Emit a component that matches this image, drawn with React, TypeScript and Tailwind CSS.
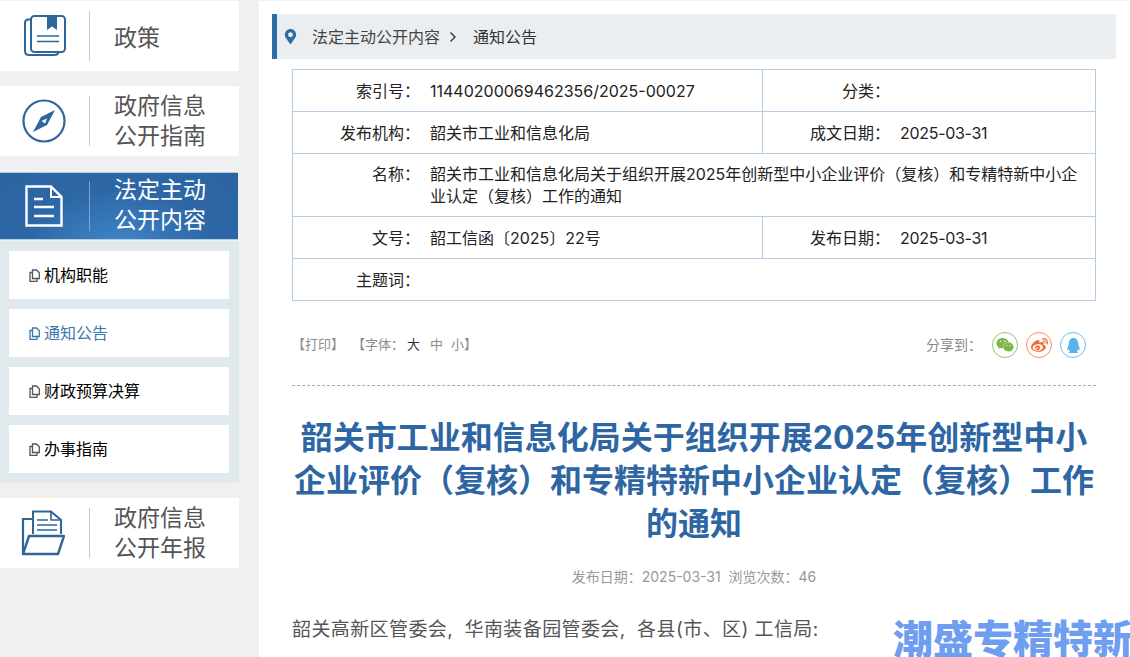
import { ChevronRight } from "lucide-react";
import { FaMapMarkerAlt, FaQq, FaWeibo, FaWeixin } from "react-icons/fa";
import type { ReactNode } from "react";

const fontCls = "font-['Inter','Noto_Sans_CJK_SC',sans-serif]";

const BookIcon = () => (
  <svg width="42" height="42" viewBox="0 0 42 42" fill="none" stroke="#2f659c" strokeWidth="2">
    <path d="M7 4.500H4.500Q1 4.500 1 8V36Q1 40 5 40H30Q34 40 34.500 37" />
    <rect x="7" y="1" width="34" height="36" rx="3.500" />
    <path d="M23 1H33V15L28 11.500L23 15Z" fill="#2f659c" stroke="none" />
    <path d="M13 21H35M13 26.500H35" strokeWidth="1.600" />
  </svg>
);

const CompassIcon = () => (
  <svg width="44" height="44" viewBox="0 0 44 44" fill="none" className="-ml-[2px]">
    <circle cx="22" cy="22" r="20.500" stroke="#2f659c" strokeWidth="2.200" />
    <path d="M33 11L25 26L11 33L19 18Z" fill="#2f659c" />
    <path d="M19.500 22L25 19.500L23 24.500Z" fill="#fff" />
  </svg>
);

const DocIcon = () => (
  <svg width="38" height="42" viewBox="0 0 38 42" fill="none" stroke="#fff" strokeWidth="2.400" className="-ml-[2px]">
    <path d="M1.500 1.500H26L36.500 12V40.500H1.500Z" />
    <path d="M26 1.500V12H36.500" strokeWidth="2" />
    <path d="M9 14H18M9 22H29M9 31H29" strokeWidth="2.600" />
  </svg>
);

const FolderIcon = () => (
  <svg width="44" height="46" viewBox="0 0 44 46" fill="none" stroke="#2f659c" strokeWidth="2" className="-ml-[3px]">
    <path d="M12 24V1.500H30L40 10V24" />
    <path d="M30 1.500V10H40" strokeWidth="1.600" />
    <path d="M16 10H27M16 15H36M16 20H36" strokeWidth="1.600" />
    <path d="M12 9H2V44" strokeWidth="2.200" />
    <path d="M8 26H43L37 44H2Z" strokeWidth="2.400" strokeLinejoin="round" />
  </svg>
);

const PageIcon = ({ className }: { className: string }) => (
  <svg width="11" height="13" viewBox="0 0 11 13" fill="none" stroke="currentColor" strokeWidth="1.300" className={className}>
    <path d="M3.500 1H7.500L10.300 3.800V9.500H3.500Z" />
    <path d="M3.500 3.500H1V12.300H8V9.500" />
  </svg>
);

const NavCard = ({
  icon,
  lines,
  active
}: {
  icon: ReactNode;
  lines: string[];
  active?: boolean;
}) => {
  if (active) {
    return (
      <div className="flex h-[68px] w-[238px] items-center border-y border-[#b5cde3] bg-[radial-gradient(ellipse_at_50%_110%,#3f86c9_0%,#2d67a5_55%,#2c64a2_100%)]">
        <div className="flex w-[89px] justify-center">{icon}</div>
        <div className="h-[50px] w-px bg-[#7ba3cc]"></div>
        <div className="pb-[2px] pl-6 text-[23px] leading-[30px] text-white">
          {lines.map((line) => (
            <div key={line}>{line}</div>
          ))}
        </div>
      </div>
    );
  }
  return (
    <div className="flex h-[70px] items-center bg-white">
      <div className="flex w-[89px] justify-center">{icon}</div>
      <div className="h-[50px] w-px bg-[#c9c9c9]"></div>
      <div className={`pl-6 text-[23px] leading-[30px] text-[#555] ${lines.length === 1 ? "pt-[3px]" : ""}`}>
        {lines.map((line) => (
          <div key={line}>{line}</div>
        ))}
      </div>
    </div>
  );
};

const subMenu = ["机构职能", "通知公告", "财政预算决算", "办事指南"];

const Sidebar = () => (
  <aside className="w-[239px] shrink-0 pt-px">
    <NavCard icon={<BookIcon />} lines={["政策"]} />
    <div className="mt-[15px]">
      <NavCard icon={<CompassIcon />} lines={["政府信息", "公开指南"]} />
    </div>
    <div className="mt-4">
      <NavCard active icon={<DocIcon />} lines={["法定主动", "公开内容"]} />
    </div>
    <div className="mt-px flex flex-col gap-[10px] bg-[#dfe9ee] pb-[10px] pl-[9px] pr-[10px] pt-[10px]">
      {subMenu.map((name) => {
        const on = name === "通知公告";
        return (
          <div key={name} className="flex h-12 items-center gap-1 bg-white pl-5 text-base">
            <PageIcon className={on ? "text-[#3d78ad]" : "text-[#555]"} />
            <span className={on ? "text-[#3d78ad]" : "text-black"}>{name}</span>
          </div>
        );
      })}
    </div>
    <div className="mt-[15px]">
      <NavCard icon={<FolderIcon />} lines={["政府信息", "公开年报"]} />
    </div>
  </aside>
);

const cellCls = "border border-[#b4cde2] text-base leading-[22px] text-[#222]";
const labelCls = "w-[127px] shrink-0 text-right";
const valueCls = "pl-[10px]";

const InfoTable = () => (
  <table className="w-[804px] table-fixed border-collapse">
    <tbody>
      <tr className="h-[42px]">
        <td className={`${cellCls} w-[470px]`} colSpan={2}>
          <div className="flex">
            <span className={labelCls}>索引号：</span>
            <span className={valueCls}>11440200069462356/2025-00027</span>
          </div>
        </td>
        <td className={cellCls} colSpan={2}>
          <div className="flex">
            <span className={labelCls}>分类：</span>
          </div>
        </td>
      </tr>
      <tr className="h-[42px]">
        <td className={cellCls} colSpan={2}>
          <div className="flex">
            <span className={labelCls}>发布机构：</span>
            <span className={valueCls}>韶关市工业和信息化局</span>
          </div>
        </td>
        <td className={cellCls} colSpan={2}>
          <div className="flex">
            <span className={labelCls}>成文日期：</span>
            <span className={`${valueCls} tracking-[-0.3px]`}>2025-03-31</span>
          </div>
        </td>
      </tr>
      <tr className="h-[63px]">
        <td className={cellCls} colSpan={4}>
          <div className="flex">
            <span className={labelCls}>名称：</span>
            <span className={`${valueCls} pr-4`}>
              韶关市工业和信息化局关于组织开展2025年创新型中小企业评价（复核）和专精特新中小企业认定（复核）工作的通知
            </span>
          </div>
        </td>
      </tr>
      <tr className="h-[42px]">
        <td className={cellCls} colSpan={2}>
          <div className="flex">
            <span className={labelCls}>文号：</span>
            <span className={valueCls}>韶工信函〔2025〕22号</span>
          </div>
        </td>
        <td className={cellCls} colSpan={2}>
          <div className="flex">
            <span className={labelCls}>发布日期：</span>
            <span className={`${valueCls} tracking-[-0.3px]`}>2025-03-31</span>
          </div>
        </td>
      </tr>
      <tr className="h-[42px]">
        <td className={cellCls} colSpan={4}>
          <div className="flex">
            <span className={labelCls}>主题词：</span>
          </div>
        </td>
      </tr>
    </tbody>
  </table>
);

const ShareBtn = ({ color, children }: { color: string; children: ReactNode }) => (
  <span
    className={`flex h-[26px] w-[26px] items-center justify-center rounded-full border ${color}`}
  >
    {children}
  </span>
);

const App = () => {
  return (
    <div className={`relative flex h-[657px] w-[1130px] gap-5 overflow-hidden bg-[#f0f0f0] ${fontCls}`}>
      <Sidebar />
      <main className="mt-px flex-1 bg-white pl-[13px] pr-[14px] pt-[13px]">
        <div className="flex h-[45px] items-center border-l-[5px] border-[#2e6da4] bg-[#ebeef1] text-base text-[#444]">
          <FaMapMarkerAlt className="ml-[6px] mr-[14px] text-[#2e6da4]" size={15} />
          <span>法定主动公开内容</span>
          <ChevronRight className="ml-[5px] text-[#444]" size={16} strokeWidth={2.500} />
          <span className="ml-[12px] text-[#333]">通知公告</span>
        </div>

        <div className="ml-[20px] mt-[10px] w-[804px]">
          <InfoTable />

          <div className="flex h-[85px] items-center justify-between border-b border-dashed border-[#aaa] pt-[4px]">
            <div className="text-[13px] text-[#8c8c8c] [text-spacing-trim:space-all]">
              <span>【打印】</span>
              <span className="ml-2">【字体：</span>
              <span className="ml-[3px] text-[#333]">大</span>
              <span className="ml-[10px]">中</span>
              <span className="ml-2">小</span>
              <span>】</span>
            </div>
            <div className="flex items-center pr-[10px]">
              <span className="mr-[10px] text-sm text-[#888]">分享到：</span>
              <div className="flex gap-[8px]">
                <ShareBtn color="border-[#8cc868]">
                  <FaWeixin className="text-[#7ab648]" size={18} />
                </ShareBtn>
                <ShareBtn color="border-[#ff8a5c]">
                  <FaWeibo className="text-[#f26a30]" size={17} />
                </ShareBtn>
                <ShareBtn color="border-[#6cc0ee]">
                  <FaQq className="text-[#58b4ea]" size={15} />
                </ShareBtn>
              </div>
            </div>
          </div>

          <h1 className="mt-[30px] text-center text-[32px] font-bold leading-[43px] text-[#2d66a3]">
            韶关市工业和信息化局关于组织开展2025年创新型中小企业评价（复核）和专精特新中小企业认定（复核）工作的通知
          </h1>

          <div className="mt-[22px] text-center text-sm leading-5 text-[#999]">
            发布日期：2025-03-31&nbsp;&nbsp;浏览次数：46
          </div>

          <p className="mt-[28px] whitespace-nowrap text-[19px] leading-[30px] tracking-[0.4px] text-[#555]">
            韶关高新区管委会,&nbsp;&nbsp;华南装备园管委会,&nbsp;&nbsp;各县(市、区)&nbsp;工信局:
          </p>
        </div>
      </main>

      {/* watermark over the page */}
      <div className="absolute bottom-[-7px] left-[893px] whitespace-nowrap text-[40px] font-black leading-[48px] text-[#6f9ef0]">
        潮盛专精特新
      </div>
    </div>
  );
};

export default App;
